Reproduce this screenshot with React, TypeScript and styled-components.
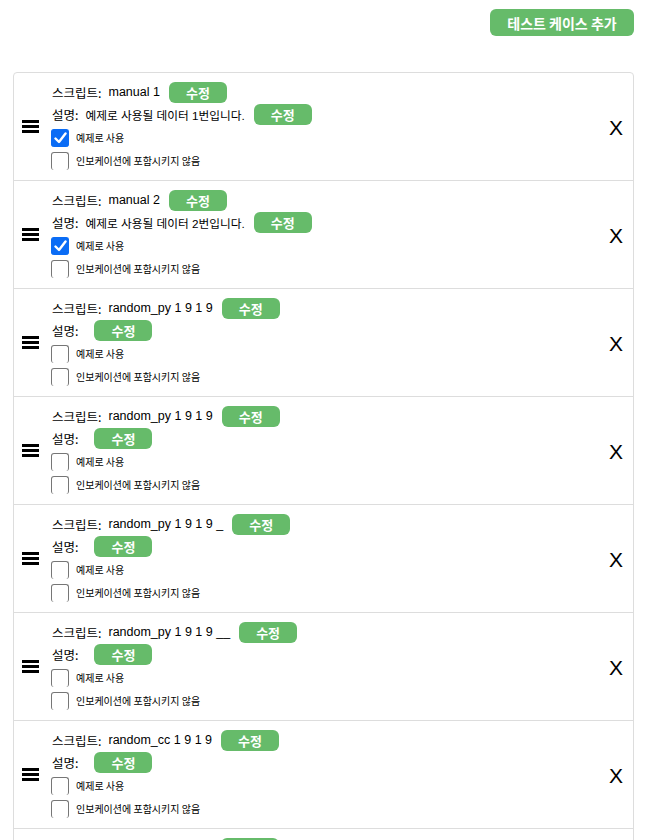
import * as React from "react";
import styled, { createGlobalStyle } from "styled-components";

const GlobalStyle = createGlobalStyle`
    body {
        margin: 0;
        background: #ffffff;
        font-family: "Liberation Sans", "Noto Sans CJK KR", sans-serif;
        color: #000000;
    }
`;

interface TestCase {
    id: number;
    script: string;
    description: string;
    example: boolean;
    excluded: boolean;
}

const cases: TestCase[] = [
    { id: 1, script: "manual 1", description: "예제로 사용될 데이터 1번입니다.", example: true, excluded: false },
    { id: 2, script: "manual 2", description: "예제로 사용될 데이터 2번입니다.", example: true, excluded: false },
    { id: 3, script: "random_py 1 9 1 9", description: "", example: false, excluded: false },
    { id: 4, script: "random_py 1 9 1 9", description: "", example: false, excluded: false },
    { id: 5, script: "random_py 1 9 1 9 _", description: "", example: false, excluded: false },
    { id: 6, script: "random_py 1 9 1 9 __", description: "", example: false, excluded: false },
    { id: 7, script: "random_cc 1 9 1 9", description: "", example: false, excluded: false },
    { id: 8, script: "random_cc 1 9 1 9", description: "", example: false, excluded: false }
];

const Page = styled.div`
    padding: 9px 12px 0 13px;
`;

const Toolbar = styled.div`
    display: flex;
    justify-content: flex-end;
`;

const AddButton = styled.button`
    width: 144px;
    height: 27px;
    border: none;
    border-radius: 6px;
    background-color: #66bb6a;
    color: white;
    font-family: "Noto Sans CJK KR", sans-serif;
    font-size: 14px;
    font-weight: 700;
    padding: 0;
`;

const List = styled.div`
    margin-top: 36px;
    border: 1px solid #dddddd;
    border-radius: 4px;
`;

const Row = styled.div`
    display: flex;
    align-items: center;
    padding: 8px 10px 8px 8px;
    border-bottom: 1px solid #dddddd;
    :last-child {
        border-bottom: none;
    }
`;

const Handle = styled.svg`
    flex-shrink: 0;
    margin-right: 13px;
`;

const Content = styled.div`
    flex: 1;
    display: flex;
    flex-direction: column;
`;

const Line = styled.div<{ $h: number }>`
    display: flex;
    align-items: center;
    height: ${p => p.$h}px;
    font-size: 12.5px;
`;

const Label = styled.span`
    font-family: "Noto Sans CJK KR", sans-serif;
`;

const Value = styled.span<{ $size?: number }>`
    margin-left: 7px;
    font-size: ${p => p.$size ?? 12.5}px;
    font-family: "Liberation Sans", "Noto Sans CJK KR", sans-serif;
`;

const EditButton = styled.button`
    width: 58px;
    height: 21px;
    margin-left: 9px;
    border: none;
    border-radius: 6px;
    background-color: #66bb6a;
    color: white;
    font-family: "Noto Sans CJK KR", sans-serif;
    font-size: 13px;
    font-weight: 700;
    padding: 0;
`;

const CheckLine = styled.label`
    display: flex;
    align-items: center;
    height: 23px;
    font-family: "Noto Sans CJK KR", sans-serif;
    font-size: 10px;
`;

const Box = styled.span<{ $checked: boolean }>`
    box-sizing: border-box;
    width: 18px;
    height: 18px;
    margin-left: -1px;
    margin-right: 7px;
    border-radius: 3px;
    border: 1px solid ${p => (p.$checked ? "#0a6cf5" : "#767676")};
    background-color: ${p => (p.$checked ? "#0a6cf5" : "#ffffff")};
    display: flex;
    align-items: center;
    justify-content: center;
`;

const Remove = styled.div`
    font-size: 21px;
    font-family: "Liberation Sans", sans-serif;
    line-height: 1;
    margin-top: 2px;
`;

const Checkbox = ({ checked, label }: { checked: boolean; label: string }) => (
    <CheckLine>
        <Box $checked={checked}>
            {checked && (
                <svg width="13" height="12" viewBox="0 0 13 12">
                    <path d="M1.5 6.5 L5 10 L11.5 1.5" fill="none" stroke="white" strokeWidth="2.4" strokeLinecap="round" strokeLinejoin="round" />
                </svg>
            )}
        </Box>
        {label}
    </CheckLine>
);

export default function App() {
    return (
        <Page>
            <GlobalStyle />
            <Toolbar>
                <AddButton>테스트 케이스 추가</AddButton>
            </Toolbar>
            <List>
                {cases.map(c => (
                    <Row key={c.id}>
                        <Handle width="17" height="13" viewBox="0 0 17 13">
                            <rect x="0" y="0" width="17" height="3" fill="#000" />
                            <rect x="0" y="5" width="17" height="3" fill="#000" />
                            <rect x="0" y="10" width="17" height="3" fill="#000" />
                        </Handle>
                        <Content>
                            <Line $h={22}>
                                <Label>스크립트:</Label>
                                <Value>{c.script}</Value>
                                <EditButton>수정</EditButton>
                            </Line>
                            <Line $h={23}>
                                <Label>설명:</Label>
                                <Value $size={11.7}>{c.description}</Value>
                                <EditButton>수정</EditButton>
                            </Line>
                            <Checkbox checked={c.example} label="예제로 사용" />
                            <Checkbox checked={c.excluded} label="인보케이션에 포함시키지 않음" />
                        </Content>
                        <Remove>X</Remove>
                    </Row>
                ))}
            </List>
        </Page>
    );
}
